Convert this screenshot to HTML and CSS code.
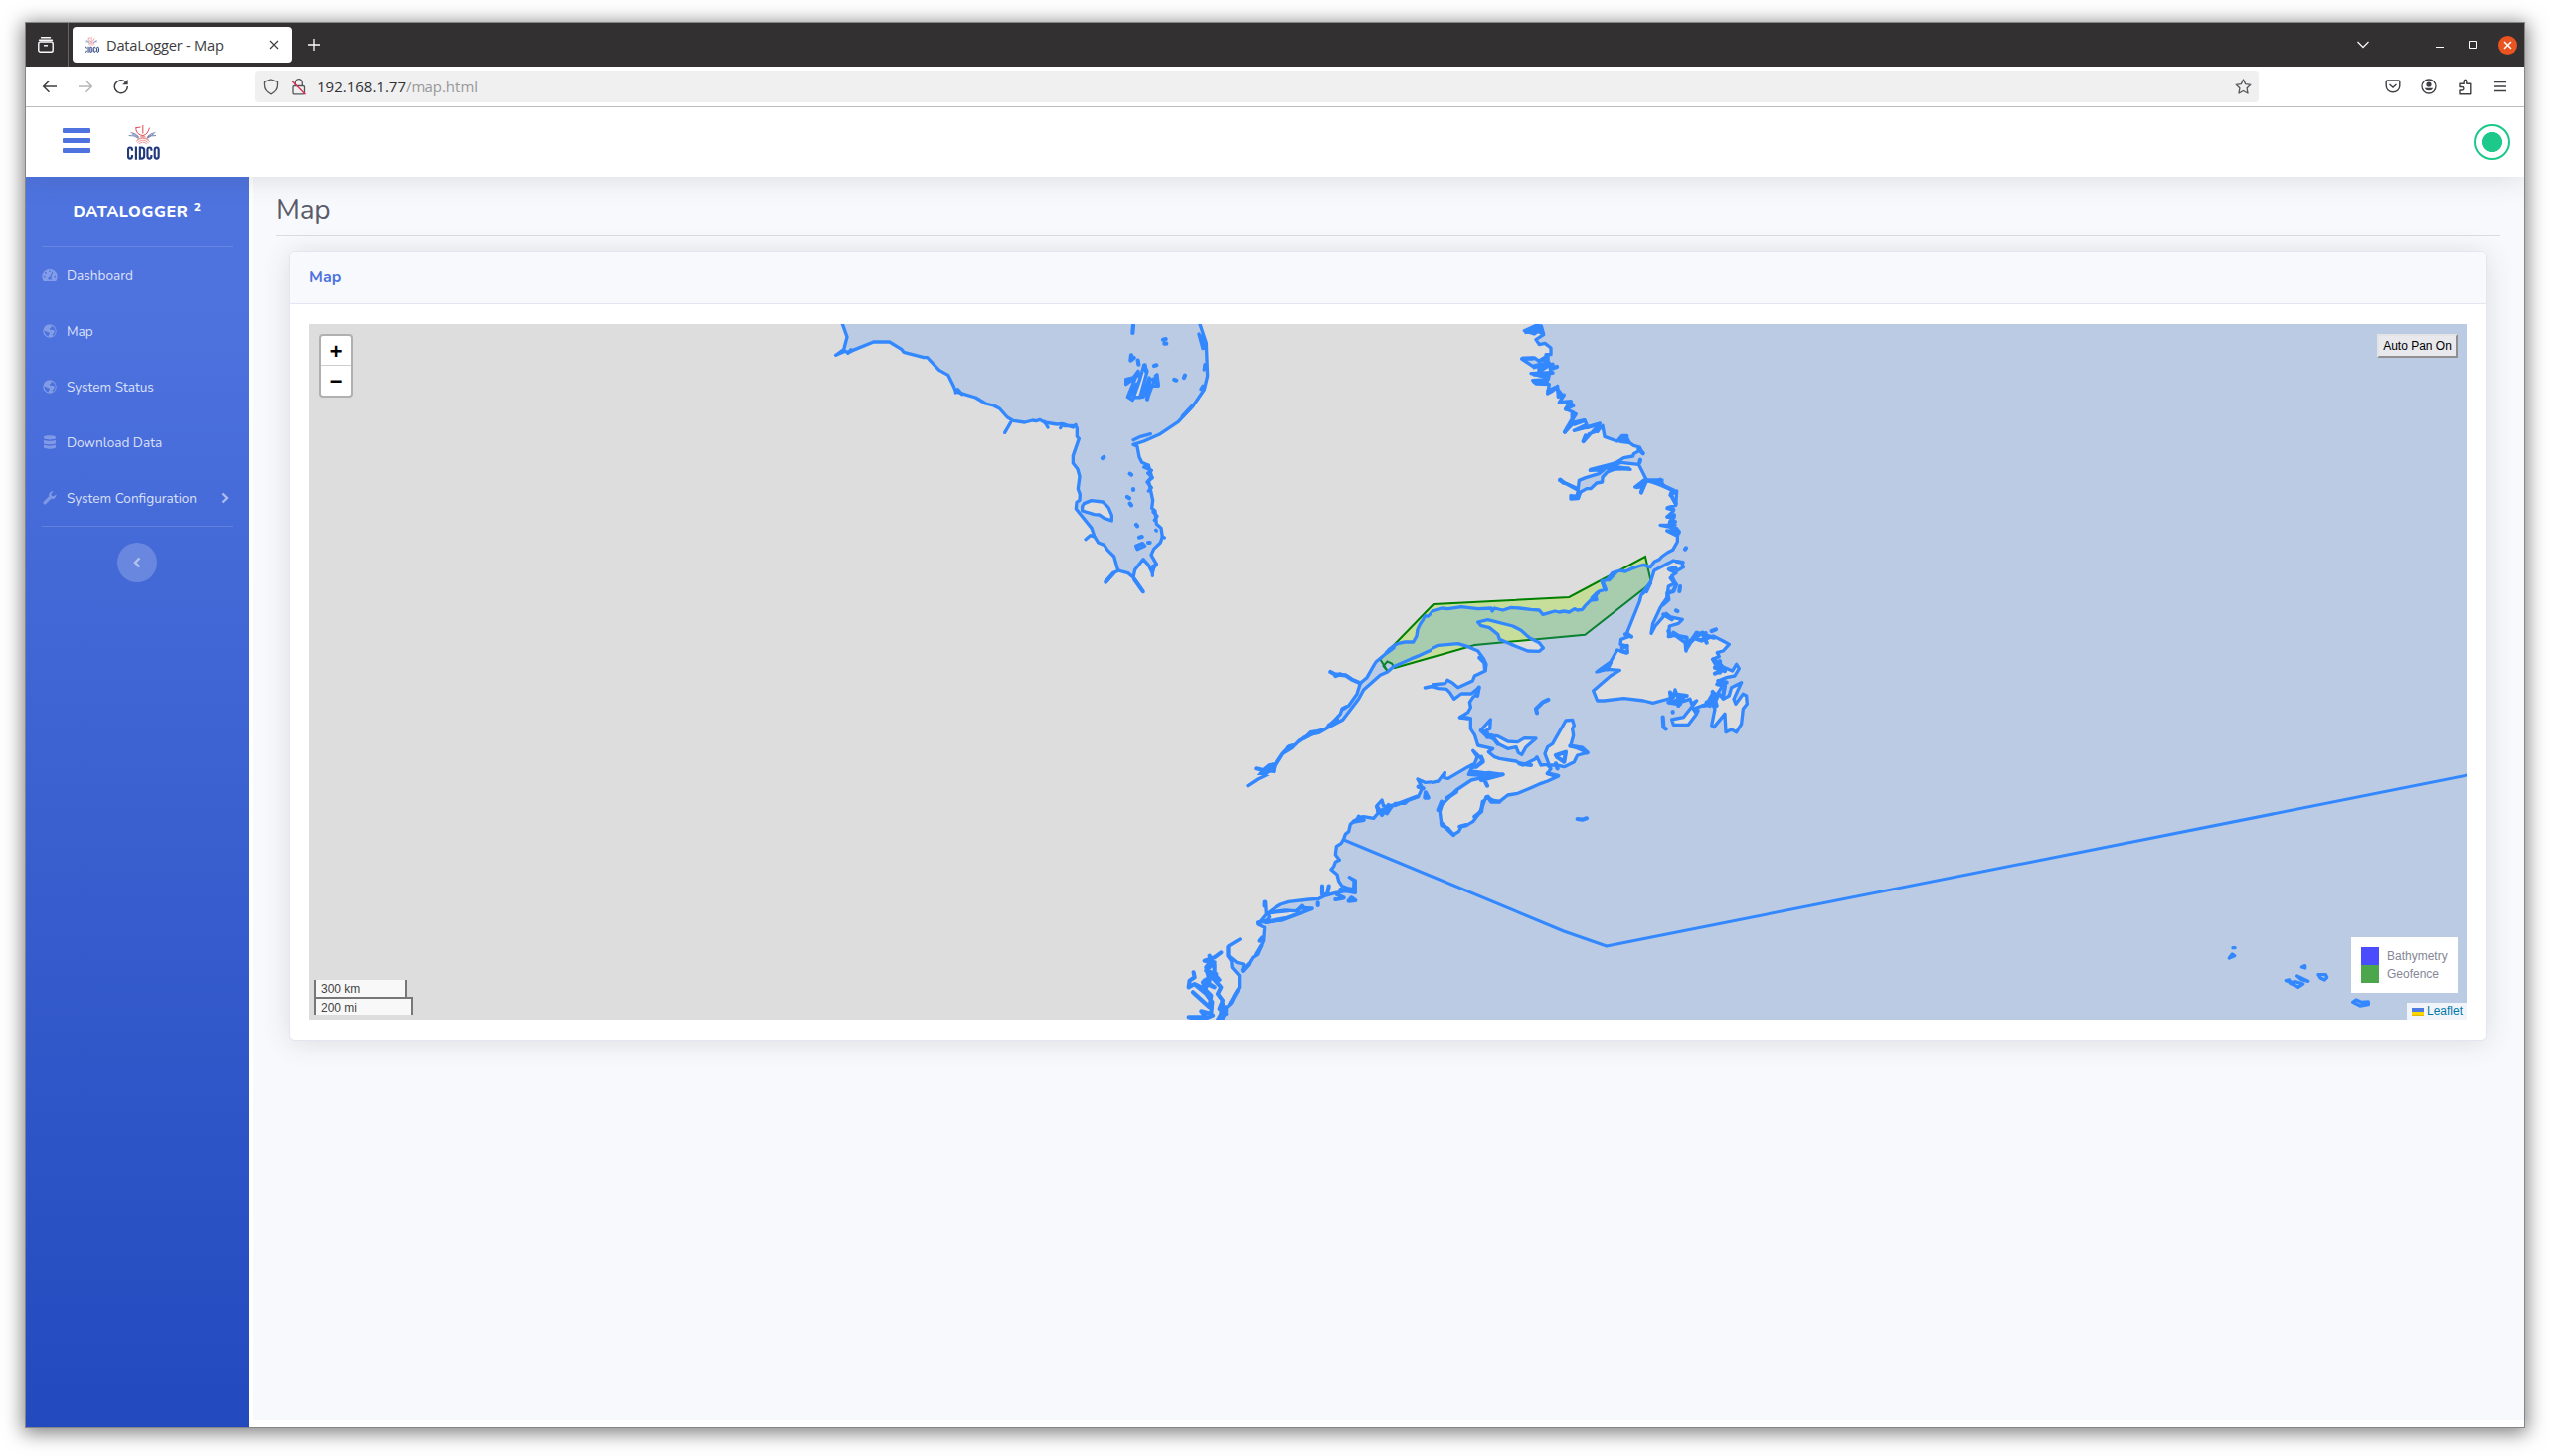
FILE: index.html
```html
<!DOCTYPE html>
<html lang="en">
<head>
<meta charset="utf-8">
<title>DataLogger - Map</title>
<link rel="stylesheet" href="styles.css">
</head>
<body>
<svg class="sprite" aria-hidden="true">
  <symbol id="cidco" viewBox="0 0 100 106">
    <g fill="none" stroke="#e0474c" stroke-width="3">
      <path d="M48 0v26M27 6v8q4 16 21 18q15-3 20-24M27 8l14-2"/>
      <path stroke-width="2.2" opacity=".75" d="M27 50q21-20 42 0M31 54q17-16 34 0M36 57q12-10 24 0M30 44q18-12 36 0M40 35h16"/>
    </g>
    <g fill="none" stroke="#3a5490" stroke-width="2.2"><path d="M11 23q12 0 24 12M5 32q17-2 29 8M16 28q10 2 20 10M86 23q-12 0-24 12M88 32q-15-2-27 8M81 28q-10 2-20 10"/></g>
    <g fill="none" stroke="#21397c" stroke-width="6.5"><path d="M15 78v-3q0-7-6-7t-6 7v20q0 7 6 7t6-7v-4M27 65v40M39 68v34h4q9 0 9-8V76q0-8-9-8zM74 78v-3q0-7-6-7t-6 7v20q0 7 6 7t6-7v-4M90 68q-6 0-6 7v20q0 7 6 7t6-7V75q0-7-6-7z"/></g>
  </symbol>
  <symbol id="globe" viewBox="0 0 16 16">
    <path fill="currentColor" fill-rule="evenodd" d="M8 1.300a6.700 6.700 0 1 0 0 13.400A6.700 6.700 0 0 0 8 1.300zM2.700 7.200 5.500 9l2 .5.500 1.200-1.200 1.300v1.500A5.600 5.600 0 0 1 2.700 7.200zM9.800 2.800l-.3 1.700-1.600.8.300 1.500 1.500.3 1.700-.3 1.500 1.200-.6 2-1.600 1.800.3 1.200A5.600 5.600 0 0 0 9.800 2.800z"/>
  </symbol>
</svg>

<div class="window">
  <header class="tabstrip">
    <div class="firefox-view">
      <svg width="16" height="16" viewBox="0 0 16 16" fill="none" stroke="#fbfbfe" stroke-width="1.400"><path d="M3.500.8h9M1.500 3.200h13" stroke-linecap="round"/><rect x=".8" y="5" width="14.400" height="10.200" rx="1.800"/><path d="M6 8.800h4"/></svg>
    </div>
    <div class="tab">
      <svg class="favicon" width="15" height="16"><use href="#cidco"/></svg>
      <span class="tab-title">DataLogger - Map</span>
      <svg width="10" height="10" viewBox="0 0 10 10" stroke="#3c3c40" stroke-width="1.100"><path d="M1 1l8 8M9 1l-8 8"/></svg>
    </div>
    <svg class="new-tab" width="14" height="14" viewBox="0 0 14 14" stroke="#fff" stroke-width="1.300"><path d="M7 1v12M1 7h12"/></svg>
    <div class="controls">
      <svg class="all-tabs" width="14" height="8" viewBox="0 0 14 8" fill="none" stroke="#f4f4f6" stroke-width="1.300"><path d="M1.500 1 7 6.500 12.500 1"/></svg>
      <svg class="minimize" width="8" height="8" fill="#fff"><path d="M0 6h8v1H0z"/></svg>
      <svg class="maximize" width="8" height="8" fill="none" stroke="#fff"><path d="M.5.5h7v7h-7z"/></svg>
      <span class="close"><svg width="9" height="9" viewBox="0 0 9 9" stroke="#fff" stroke-width="1.500"><path d="M1 1l7 7M8 1 1 8"/></svg></span>
    </div>
  </header>

  <div class="toolbar">
    <div class="history">
      <svg width="16" height="14" viewBox="0 0 16 14" fill="none" stroke="#3f3f43" stroke-width="1.500"><path d="M15 7H2M7.500 1.200 1.700 7l5.800 5.800"/></svg>
      <svg width="16" height="14" viewBox="0 0 16 14" fill="none" stroke="#b6b6b8" stroke-width="1.500"><path d="M1 7h13M8.500 1.200 14.300 7l-5.800 5.800"/></svg>
      <svg width="16" height="16" viewBox="0 0 16 16" fill="none" stroke="#3f3f43" stroke-width="1.500"><path d="M14.300 8A6.500 6.500 0 1 1 12 3.300"/><path d="M14.600 1v5.200H9.200z" fill="#3f3f43" stroke="none"/></svg>
    </div>
    <div class="urlbar">
      <svg width="16" height="17" viewBox="0 0 16 17" fill="none" stroke="#55555a" stroke-width="1.300"><path d="M8 1 14.500 3.300v3.500c0 4-2.500 7-6.500 9-4-2-6.500-5-6.500-9V3.300z"/></svg>
      <svg class="lock" width="16" height="17" viewBox="0 0 16 17" fill="none" stroke="#55555a" stroke-width="1.300"><path d="M4.300 7.500V4.200a3.500 3.500 0 0 1 7 0v3.300"/><rect x="2" y="7.500" width="11.500" height="8.300" rx="1.300"/><path stroke="#e22850" d="M1 2.500 14.500 16.300"/></svg>
      <span class="url">192.168.1.77<span class="path">/map.html</span></span>
      <svg class="star" width="17" height="16" viewBox="0 0 17 16" fill="none" stroke="#55555a" stroke-width="1.300" stroke-linejoin="round"><path d="m8.500 1 2.200 4.600 5.100.7-3.700 3.500.9 5.200-4.500-2.500L4 15l.9-5.200L1.200 6.300l5.100-.7z"/></svg>
    </div>
    <div class="actions">
      <svg width="16" height="16" viewBox="0 0 16 16" fill="none" stroke="#3f3f43" stroke-width="1.400"><path d="M2.500 2h11q1.300 0 1.300 1.300V7.500a6.800 6.300 0 0 1-13.600 0V3.300Q1.200 2 2.500 2z"/><path d="m4.500 6 3.500 3 3.500-3"/></svg>
      <svg width="16" height="16" viewBox="0 0 16 16"><circle cx="8" cy="8" r="7" fill="none" stroke="#3f3f43" stroke-width="1.300"/><circle cx="8" cy="6" r="2.600" fill="#3f3f43"/><path fill="#3f3f43" d="M3.700 9.800h8.600a4.500 3.600 0 0 1-8.600 0z"/></svg>
      <svg width="16" height="17" viewBox="0 0 16 17" fill="none" stroke="#3f3f43" stroke-width="1.400" stroke-linejoin="round"><path d="M2 15.800V12h2.200a1.700 1.700 0 0 0 0-3.500H2V5.200h4.200V3a1.800 1.800 0 0 1 3.600 0v2.200h4v10.600z"/></svg>
      <svg width="14" height="12" viewBox="0 0 14 12" stroke="#3f3f43" stroke-width="1.300"><path d="M1 1.500h12M1 6h12M1 10.500h12"/></svg>
    </div>
  </div>

  <nav class="topbar">
    <div class="menu-toggle"><i></i><i></i><i></i></div>
    <svg class="logo" width="33" height="35"><use href="#cidco"/></svg>
    <span class="status"></span>
  </nav>

  <div class="page">
    <aside class="sidebar">
      <div class="brand">DATALOGGER <sup>2</sup></div>
      <hr>
      <a class="item"><svg width="16" height="16" viewBox="0 0 16 16" fill="currentColor"><path fill-rule="evenodd" d="M8 2a7.500 7.500 0 0 0-6.500 11.400q.3.600 1 .6h11q.7 0 1-.6A7.500 7.500 0 0 0 8 2zm0 1.200a.9.900 0 1 1 0 1.800.9.900 0 0 1 0-1.800zM3.900 5a.9.900 0 1 1 0 1.800.9.900 0 0 1 0-1.800zM2.700 8.800a.9.900 0 1 1 0 1.800.9.900 0 0 1 0-1.800zm10.600 0a.9.900 0 1 1 0 1.800.9.900 0 0 1 0-1.800zM10.500 4.500l.8.300-1.800 5.500q.9 1.400-.2 2.300H6.700q-1.200-2.200 1.600-3z"/></svg><span>Dashboard</span></a>
      <a class="item"><svg width="16" height="16"><use href="#globe"/></svg><span>Map</span></a>
      <a class="item"><svg width="16" height="16"><use href="#globe"/></svg><span>System Status</span></a>
      <a class="item"><svg width="16" height="16" viewBox="0 0 16 16" fill="currentColor"><path d="M2 2.800C2 .7 14 .7 14 2.800v1C14 5.900 2 5.900 2 3.800zM2 5.700c2.500 1.500 9.500 1.500 12 0v3c0 2.100-12 2.100-12 0zM2 10.600c2.500 1.500 9.500 1.500 12 0v2.500c0 2.300-12 2.300-12 0z"/></svg><span>Download Data</span></a>
      <a class="item"><svg width="16" height="16" viewBox="0 0 16 16" fill="currentColor"><path d="M14.500 4.200a4 4 0 0 1-5.100 4.600l-5.200 5.300a1.700 1.700 0 0 1-2.400-2.400L7.100 6.500A4 4 0 0 1 11.700 1.400L9.500 3.800l.4 2 2 .4z"/></svg><span>System Configuration</span><svg class="chevron" width="8" height="12" viewBox="0 0 8 12" fill="none" stroke="currentColor" stroke-width="2.400"><path d="M1.500 1.500 6 6 1.500 10.500"/></svg></a>
      <hr>
      <button class="collapse"><svg width="8" height="12" viewBox="0 0 8 12" fill="none" stroke="currentColor" stroke-width="2.400"><path d="M6.500 1.500 2 6l4.500 4.500"/></svg></button>
    </aside>

    <main class="content">
      <h1>Map</h1>
      <section class="card">
        <h2>Map</h2>
        <div class="card-body">
          <div class="map">
            <svg class="layers" viewBox="311 326 2171 700">
              <defs>
                <clipPath id="north-east"><path d="M0 0H900V690H0z"/></clipPath>
                <clipPath id="estuary"><path d="M0 0H660V720H0z"/></clipPath>
                <clipPath id="gulf"><path d="M0 0H1020V960H0z"/></clipPath>
                <clipPath id="east-coast"><path d="M0 0H870V780H0z"/></clipPath>
              </defs>
              <path class="geofence" d="M1388.300 663.300 1442 608 1578.300 601 1655 560 1661 586.500 1594.300 638.700 1483.500 649 1402.700 672 1400 667.500 1395.500 665.500 1391.500 670 1396 675.500z"/>
              <circle cx="1396" cy="676" r="1" fill="#e03040"/>
              <path class="sea" d="M1780 326H2482V1026H1440V860H1780z"/>

              <!-- Hudson Bay and James Bay -->
              <g transform="translate(800 310) scale(.33333333)">
                <path class="water" d="M135 20 142 48 156 87 146 125 122 142 150 130 160 134 172 128 236 102 284 102 320 124 327 133 388 149 398 149 434 187 461 202 478 236 484 252 500 257 544 270 574 288 598 294 616 303 640 330 658 340 692 345 716 339 726 341 738 337 752 345 790 351 806 349 812 356 830 355 846 356 850 362 850 388 856 394 838 446 838 468 852 486 858 508 853 546 859 562 858 580 849 586 847 606 894 664 902 688 914 708 932 715 942 730 962 750 974 792 1004 800 1020 813 1025 790 1050 758 1066 776 1078 800 1082 785 1090 773 1074 745 1082 727 1102 708 1108 690 1104 664 1090 652 1086 612 1076 604 1079 580 1072 548 1066 520 1076 510 1066 475 1046 466 1038 450 1032 418 1020 412 1052 402 1098 382 1156 343 1204 290 1234 246 1244 205 1240 105 1221 48 1215 20z
                M866 598 871 590 893 581 928 585 945 602 955 625 955 642 932 634 917 624 902 623 866 612z
                M998 215 1020 210 1035 190 1003 268 1018 278 1040 215 1052 172 1062 190 1040 270 1050 265 1068 210 1062 275 1075 240 1092 200 1096 235 1075 235 1050 268 1020 270 1046 195 998 230z
                M1028 718 1048 710 1055 718 1032 728z"/>
                <path class="line" d="M158 136 168 125M484 255 490 245 503 260M650 345 632 376M752 343 762 360M800 362 808 350 838 360 846 352M876 698 890 686 902 690M937 828 965 797 976 792M1020 813 1050 857M1078 808V780L1090 773M1020 398 1042 388 1072 380M1066 475 1052 480 1075 490 1064 498 1078 512 1062 525 1075 542 1066 552M1080 615 1092 628 1084 640M1108 690 1114 693M1090 672 1088 670M1218 78 1230 122M1236 170 1234 186M1230 235 1224 245M1200 295 1168 328"/>
                <path class="line wide" d="M937 826 960 800M1024 820 1048 854M1020 52 1018 75M1014 142 1012 158 1022 150M1034 158 1036 170M1055 172 1058 190M1000 222 1018 215M1030 230 1010 265M1070 215 1062 275M1088 205 1094 230 1080 215M1110 95 1118 93M1114 107H1120M1083 174 1090 172M1144 216 1150 218M1176 203 1173 210M927 453 931 450M1010 500 1014 503M1020 546V549M1002 570 1008 574M1010 590 1014 595M1029 654 1032 658M1038 692 1046 690M1065 708H1070M1225 85 1232 120M1198 296 1170 326"/>
              </g>

              <!-- Labrador coast -->
              <g transform="translate(1480 310) scale(.33333333)">
               <g clip-path="url(#north-east)">
                <path class="water" d="M210 20 200 50 160 68 190 78 213 60 218 80 195 95 205 110 222 106 240 120 240 140 225 140 230 155 205 160 190 150 152 153 185 175 205 170 215 185 235 165 240 195 180 197 210 205 235 200 232 215 185 218 195 228 235 230 230 258 245 250 260 235 262 268 280 262 265 285 300 285 308 295 285 305 298 310 316 320 300 345 282 375 310 345 342 338 348 352 310 370 350 360 388 348 340 402 355 380 382 370 396 355 402 388 440 402 455 385 470 385 468 400 490 415 508 420 518 440 508 430 490 440 488 447 460 452 440 465 405 480 358 490 400 488 385 500 345 512 325 520 322 545 266 520 322 550 318 568 300 566V576L322 575 330 555 348 545 360 545 378 528 395 525 396 510 410 495 450 480 480 487 440 480 415 486 450 466 505 472 527 515 494 540 520 540 513 558 530 520 560 530 570 517 580 535 605 550 600 565 620 552 617 595 593 602 610 612 592 630 612 632 598 650 615 655 570 655 620 665 628 675 590 672 622 688 625 705 608 722 V760H940V20z"/>
                <path class="line wide" d="M165 72 190 65 215 75M200 52 195 70 210 55M155 152H185M205 160 230 145V175L205 190M190 178 222 168M190 200 245 195M190 222H228M205 185 225 215M245 170V182L258 177M232 250 255 240 275 265M270 285 300 282 285 305M305 315V335L290 360 282 374M310 350 340 340M350 360 385 350 380 372M345 385 338 402M455 398 467 388 475 405 450 402M505 425 518 438M360 488 430 470 415 490M430 485 475 484M385 490 445 465M268 518 278 527M305 572H322M500 540 528 518M513 555 520 535M530 520 575 520M560 528 610 550 603 565 617 590M592 604 610 608M592 630 612 625 600 645H615M605 668 625 680M510 458 508 466"/>
               </g>
              </g>

              <!-- Lower St. Lawrence -->
              <g transform="translate(1220 540) scale(.33333333)">
               <g clip-path="url(#estuary)">
                <path class="water" d="M740 216 700 218 675 228 668 220 650 240 640 240 635 250 625 265 618 280 615 300 605 318 580 318 560 322 545 330 532 340 520 355 492 378 482 395 465 425 445 442 435 475 410 510 390 520 385 535 350 572 340 580 310 588 295 590 280 605 262 615 250 628 232 632 210 655 190 685 168 690 150 705 130 730 105 752 150 725 168 708 185 708 190 690 212 655 240 638 255 622 290 598 320 592 345 578 392 553 440 490 455 462 505 418 527 408 545 392 600 368 625 358 685 330 760 323z"/>
                <path class="water" d="M720 435 708 433 690 445 640 456 672 450 705 462H740z"/>
                <path class="line wide" d="M355 408 368 415 400 418 418 430 445 442M370 420 385 415M130 700 165 708M165 705 180 690 185 708M155 712 108 750M350 570 375 552M392 520 400 515M525 350 545 335M228 636 240 632M275 608 310 590"/>
               </g>
              </g>

              <!-- Gulf of St. Lawrence, Newfoundland and the Maritimes -->
              <g transform="translate(1440 540) scale(.33333333)">
               <g clip-path="url(#gulf)">
                <path class="water" d="M742 -30V15L728 40 712 48 695 60 688 68 672 76 660 92 640 85 622 90 600 98 585 105 570 102 545 110 530 130 515 135 522 160 505 165 495 178 498 190 480 192 464 208 455 220 440 222 432 218 415 228 400 225 385 228 372 225 336 235 325 222 300 220 265 216 240 214 215 222 190 216 183 225 180 216 140 218 90 212 50 218 30 216 10 222 -30 235V350L20 328 80 323 110 332 140 345 158 370 165 385 162 405 130 420 124 435 80 455 62 440 48 433 40 443 -30 450V458L0 452 20 458 45 460 55 470 68 490 90 474 120 474 143 455 140 470 125 485 115 500 118 515 110 530 85 546 118 548 118 580 130 598 140 630 185 640 172 650 190 665 205 670 235 675 255 678 275 690 312 672 318 665 330 690 348 688 360 700 350 715 378 725 350 738 330 745 300 758 260 775 230 780 205 800 185 795 165 785 155 810 150 822 140 840 125 860 105 872 90 875 82 890 66 900 50 880 30 872 25 830 32 808 75 765 120 735 165 725 178 720 215 718 172 712 145 720 112 718 120 700 138 692 155 675 140 660 125 646 138 665 130 685 110 695 50 730 38 728 40 712 20 738 0 742 -30 735V1000H1060V-30z
                M140 258 170 251 245 270 270 283 295 305 325 320 337 336 325 346 290 345 240 325 205 310 200 295 175 275 148 268z
                M660 140 650 155 632 178 628 195 590 290 600 300 572 310 570 325 590 330 592 350 560 342 540 378 498 408 530 400 568 403 540 420 488 465 500 495 520 495 580 488 640 495 668 502 705 492 730 485 735 462 745 490 765 480 750 500 780 490 785 505 800 495 760 545 725 552 730 568 775 568 800 535 790 520 830 505 850 470 865 480 850 510 855 520 845 570 852 575 885 535 888 590 905 582 920 590 935 565 940 520 952 505 950 480 940 475 918 505 912 490 935 440 905 455 898 480 880 490 865 470 885 440 865 435 890 425 915 420 928 398 920 385 908 405 885 395 865 400 848 370 868 362 862 350 880 345 898 325 880 315 850 300 815 315 828 290 800 300 770 320 768 345 765 320 735 298 715 302 718 270 745 262 757 250 722 243 708 232 675 270 663 292 668 262 690 215 710 185 715 150 735 140 725 118 738 110 715 98 735 92 742 102 760 92 755 78 730 72 672 102z
                M148 585 178 552 176 580 165 585 172 600 200 602 230 618 260 620 280 608 315 609 285 635 272 658 262 652 255 635 230 640 200 625 190 612 165 602z
                M405 555 425 553 430 570 425 580 428 600 420 630 470 652 440 660 430 680 400 695 378 690 355 690 342 655 350 635 365 625z"/>
                <path class="line wide" d="M143 455 138 480M88 545 110 548M145 365 160 380 162 402M535 130 555 108M515 135 525 160M485 185 500 170M638 170 660 140 648 165M585 295 603 302M575 335 590 330M588 350 572 345M505 405 540 380 530 400M720 100 735 95M740 75 758 78M715 285 720 300M730 290 745 300 770 305 768 340 790 305 810 312M770 330 800 300 818 290 830 320M790 305 800 290 852 305M845 285 858 280M750 150 748 165M738 223 742 225M765 38 768 34M722 125 738 145 730 165 712 170 715 190 698 205M700 235 725 250M850 370 870 385 885 400 855 413M855 395 885 405M865 435 890 440M870 375V410M862 445 885 450 880 480M848 468 860 510 830 500M850 480 840 510M820 510 850 505M800 530 803 525M720 470 725 500 750 490 745 510M730 475 770 480M715 500 750 505M728 528V530M698 545 700 575 707 580M352 492 335 500 315 520 318 532M418 632 455 638 470 652M375 660 405 650 400 680 378 665M375 685 380 700M350 715 382 722M265 685 300 690M150 585 165 590 168 605M180 600 200 625M150 665 155 680 135 695M125 710 165 715M160 735 168 752M150 735 215 718M170 785 180 800H205M45 790 75 770M20 825 30 800M30 865 45 880 66 900M85 875 105 870M130 845 150 830 155 800M440 852 455 854 468 850"/>
               </g>
              </g>

              <!-- New England and the Mid-Atlantic -->
              <g transform="translate(1150 780) scale(.33333333)">
               <g clip-path="url(#east-coast)">
                <path class="water" d="M960 -20 920 12 905 5 880 20 850 22 828 12 842 38 830 65 800 75 790 85 760 85 745 100 725 92 720 75 705 92 708 115 695 130 665 125 650 128 625 148 620 170 610 178 605 192 598 205 583 215 580 240 592 256 580 262 575 275 567 285 585 300 590 320 600 335 620 342 635 345 636 318 622 308 640 318V355L610 350 580 355 545 365 530 373 500 375 440 382 415 390 395 402 370 420 368 382 370 420 345 450 365 460 362 500 355 515 345 540 330 550 315 575 300 592 302 570 282 565 258 545 258 515 292 495 255 518 255 545 266 560 268 580 290 605 290 640 275 665 268 685 245 708 240 738V770H1000V-20z
                M375 418 395 412 430 408 460 410 480 400 510 402 480 415 420 438 370 442 380 428z"/>
                <path class="line" d="M380 -5 345 12 315 32M368 445 420 435 510 403M385 415 440 410"/>
                <path class="line wide" d="M345 445 368 440M372 443 430 432M465 410 480 395 490 408M540 335V360H555L560 335M580 375 605 370 585 360M595 345 635 350M620 380 640 378 628 370ZM527 385V393M852 52 850 68H860ZM830 35 845 40M705 95 720 120 740 90M712 110 750 92 735 115M760 90 825 65M635 140 665 135 650 125M350 500 358 490M340 540 355 515M300 588 318 570M365 383V395M262 690 285 650M238 735 250 710M235 535 215 550 185 560 215 565 190 590 220 600 185 620 215 640 180 625 190 650 205 665 200 700 150 655M200 545 205 560 190 580 200 620M215 570V600L230 618 210 612 235 640 225 660 240 680 230 705 250 720M205 600 190 640 175 640 155 630 137 640 140 620 155 610 152 595M160 635 190 660 208 685 205 720 175 712 190 730 137 730 180 738 210 725M240 690 232 735M248 700 225 738"/>
               </g>
              </g>

              <path class="line" d="M1351.700 845 1573 937 1616 952 2490 778.500"/>

              <!-- Bermuda and outlying islands -->
              <g transform="translate(2180 920) scale(.33333333)">
                <path class="islet" d="M198 101H204M187 132 196 120 203 125ZM406 159 416 155V162ZM358 200 368 198 372 205ZM370 207 395 220 410 210 385 203ZM392 186 425 202 405 197ZM456 182H478L482 190 475 198 462 192ZM560 265 570 258 585 265 607 264V272L582 276Z"/>
              </g>
            </svg>

            <div class="zoom"><span>+</span><span>&minus;</span></div>
            <button class="autopan">Auto Pan On</button>
            <div class="scale"><span class="km">300 km</span><span class="mi">200 mi</span></div>
            <div class="legend">
              <div><i class="bathymetry"></i>Bathymetry</div>
              <div><i class="fence"></i>Geofence</div>
            </div>
            <div class="attribution"><svg width="12" height="8"><path fill="#4c7be1" d="M0 0h12v4H0z"/><path fill="#ffd500" d="M0 4h12v3H0z"/><path fill="#e0bc00" d="M0 7h12v1H0z"/></svg>Leaflet</div>
          </div>
        </div>
      </section>
    </main>
  </div>
</div>
</body>
</html>
```
FILE: styles.css
```css
* { box-sizing: border-box; }

body {
  margin: 0;
  height: 1465px;
  padding: 22px 25px 28px;
  background: #fff;
  font-family: Nunito, Lato, sans-serif;
  overflow: hidden;
}

svg { display: block; flex: none; }
.sprite { position: absolute; width: 0; height: 0; }

.window {
  height: 1415px;
  display: flex;
  flex-direction: column;
  background: #fff;
  border: 1px solid #858585;
  box-shadow: 0 3px 18px 2px rgba(0, 0, 0, .5);
}

/* Browser chrome */
.tabstrip {
  height: 44px;
  flex: none;
  display: flex;
  align-items: center;
  background: #333032;
}
.firefox-view {
  width: 43px;
  height: 44px;
  padding-left: 12px;
  display: flex;
  align-items: center;
  border-right: 1px solid #666467;
}
.tab {
  width: 221px;
  height: 36px;
  margin-left: 4px;
  padding: 0 13px 0 12px;
  display: flex;
  align-items: center;
  background: #fff;
  border-radius: 4px;
}
.tab-title {
  flex: 1;
  margin-left: 7px;
  font: 14.700px/20px "Open Sans", sans-serif;
  letter-spacing: -.25px;
  color: #3d3d40;
  white-space: nowrap;
}
.new-tab { margin-left: 15px; }
.controls {
  margin-left: auto;
  padding-right: 7px;
  display: flex;
  align-items: center;
}
.all-tabs { margin-right: 66px; }
.minimize { margin-right: 26px; }
.maximize { margin-right: 21px; }
.close {
  width: 19px;
  height: 19px;
  display: grid;
  place-items: center;
  border-radius: 50%;
  background: #e95420;
}

.toolbar {
  height: 41px;
  flex: none;
  display: flex;
  align-items: center;
  border-bottom: 1px solid #bcbcbe;
}
.history {
  width: 231px;
  padding-left: 16px;
  display: flex;
  align-items: center;
  gap: 20px;
}
.urlbar {
  width: 2015px;
  height: 32px;
  padding: 0 7px 0 8px;
  display: flex;
  align-items: center;
  background: #f0f0f1;
  border-radius: 4px;
}
.lock { margin-left: 12px; }
.url {
  margin-left: 10px;
  font: 15px/20px "Open Sans", sans-serif;
  color: #303033;
}
.url .path { color: #98989a; }
.star { margin-left: auto; }
.actions {
  flex: 1;
  padding-right: 17px;
  display: flex;
  align-items: center;
  justify-content: flex-end;
  gap: 20.300px;
}

/* Application */
.topbar {
  position: relative;
  z-index: 1;
  height: 70px;
  flex: none;
  padding: 0 14px 0 37px;
  display: flex;
  align-items: center;
  background: #fff;
  box-shadow: 0 2px 28px rgba(58, 59, 69, .15);
  clip-path: inset(0 0 -40px 0);
}
.menu-toggle { display: grid; gap: 5px; margin-bottom: 3px; }
.menu-toggle i { width: 28px; height: 5px; border-radius: 1px; background: #4e73df; }
.logo { margin-left: 37px; margin-top: 1px; }
.status {
  width: 36px;
  height: 36px;
  margin-left: auto;
  border: 2px solid #1cc88a;
  border-radius: 50%;
  background: radial-gradient(#1cc88a 9.700px, #fff 10.300px);
}

.page { flex: 1; display: flex; min-height: 0; }

.sidebar {
  width: 224px;
  flex: none;
  background: linear-gradient(180deg, #4e73df 10%, #224abe 100%);
  color: #fff;
}
.sidebar hr {
  height: 1px;
  margin: 0 16px;
  border: 0;
  background: rgba(255, 255, 255, .15);
}
.brand {
  height: 70px;
  text-align: center;
  font-size: 16px;
  font-weight: 800;
  line-height: 70px;
  letter-spacing: .65px;
}
.brand sup { font-size: 12px; line-height: 0; }
.item {
  height: 56px;
  padding: 0 20px 0 16px;
  display: flex;
  align-items: center;
  font-size: 13.600px;
  color: rgba(255, 255, 255, .8);
}
.item svg { color: rgba(255, 255, 255, .3); }
.item span { margin-left: 9px; }
.item .chevron { margin-left: auto; color: rgba(255, 255, 255, .55); }
.collapse {
  width: 40px;
  height: 40px;
  margin: 16px auto 0;
  padding: 0 1px 0 0;
  display: grid;
  place-items: center;
  border: 0;
  border-radius: 50%;
  background: rgba(255, 255, 255, .2);
  color: rgba(255, 255, 255, .5);
}

.content {
  flex: 1;
  margin: 0 0 7px 4px;
  padding: 16px 24px 0;
  background: #f8f9fc;
  overflow: hidden;
}
h1 {
  height: 43px;
  margin: 0 0 16px;
  border-bottom: 1px solid #dcdde1;
  font-size: 28px;
  font-weight: 400;
  line-height: 35px;
  letter-spacing: -.3px;
  color: #5a5c69;
}
.card {
  margin: 0 13px;
  border: 1px solid #e3e6f0;
  border-radius: 6px;
  background: #fff;
  box-shadow: 0 2px 28px rgba(58, 59, 69, .15);
}
h2 {
  height: 52px;
  margin: 0;
  padding-left: 19px;
  border-bottom: 1px solid #e3e6f0;
  border-radius: 5px 5px 0 0;
  background: #f8f9fc;
  font-size: 16px;
  font-weight: 700;
  line-height: 50px;
  color: #4e73df;
}
.card-body { padding: 20px 19px; }

/* Map */
.map {
  position: relative;
  height: 700px;
  background: #ddd;
  font: 12px/18px "Liberation Sans", Arial, sans-serif;
}
.layers { width: 100%; height: 700px; overflow: hidden; }
.sea { fill: #38f; fill-opacity: .2; }
.water {
  fill: #38f;
  fill-opacity: .2;
  fill-rule: evenodd;
  stroke: #38f;
  stroke-width: 10;
  stroke-linejoin: round;
}
.line {
  fill: none;
  stroke: #38f;
  stroke-width: 3;
  stroke-linejoin: round;
  stroke-linecap: round;
}
g .line { stroke-width: 10; }
g .wide { stroke-width: 12.500; }
.islet {
  fill: none;
  stroke: #38f;
  stroke-width: 10;
  stroke-linejoin: round;
  stroke-linecap: round;
}
.geofence {
  fill: #a6e238;
  fill-opacity: .4;
  stroke: green;
  stroke-width: 2;
}

.zoom {
  position: absolute;
  left: 10px;
  top: 10px;
  width: 34px;
  border: 2px solid #b0b0b0;
  border-radius: 4px;
  background: #fff;
}
.zoom span {
  display: block;
  height: 30px;
  font: bold 22px/35px "Liberation Mono", monospace;
  text-align: center;
  color: #000;
}
.zoom span:first-child { border-bottom: 1px solid #ccc; }
.autopan {
  position: absolute;
  right: 10px;
  top: 10px;
  width: 81px;
  height: 24px;
  padding: 0;
  border: 2px outset #e3e3e6;
  background: #e9e9ed;
  font: 12px "Liberation Sans", Arial, sans-serif;
  color: #000;
}
.scale {
  position: absolute;
  left: 5px;
  bottom: 5px;
  font-size: 12px;
  line-height: 18px;
  color: #444;
}
.scale span {
  display: block;
  padding-left: 5px;
  border: 2px solid #777;
  background: #f8f8f8;
}
.scale .km { width: 93px; height: 17px; border-width: 0 2px; }
.scale .mi { width: 99px; height: 18px; border-bottom: 0; }
.legend {
  position: absolute;
  right: 10px;
  bottom: 27px;
  width: 107px;
  height: 56px;
  padding: 10px;
  background: #fff;
  color: #858796;
}
.legend div { display: flex; height: 18px; }
.legend i { width: 18px; height: 18px; margin-right: 8px; }
.bathymetry { background: #4c4cff; }
.fence { background: #4ca64c; }
.attribution {
  position: absolute;
  right: 0;
  bottom: 0;
  height: 17px;
  padding: 0 5px;
  display: flex;
  align-items: center;
  gap: 3px;
  background: rgba(255, 255, 255, .8);
  line-height: 15px;
  color: #0078a8;
}
```
